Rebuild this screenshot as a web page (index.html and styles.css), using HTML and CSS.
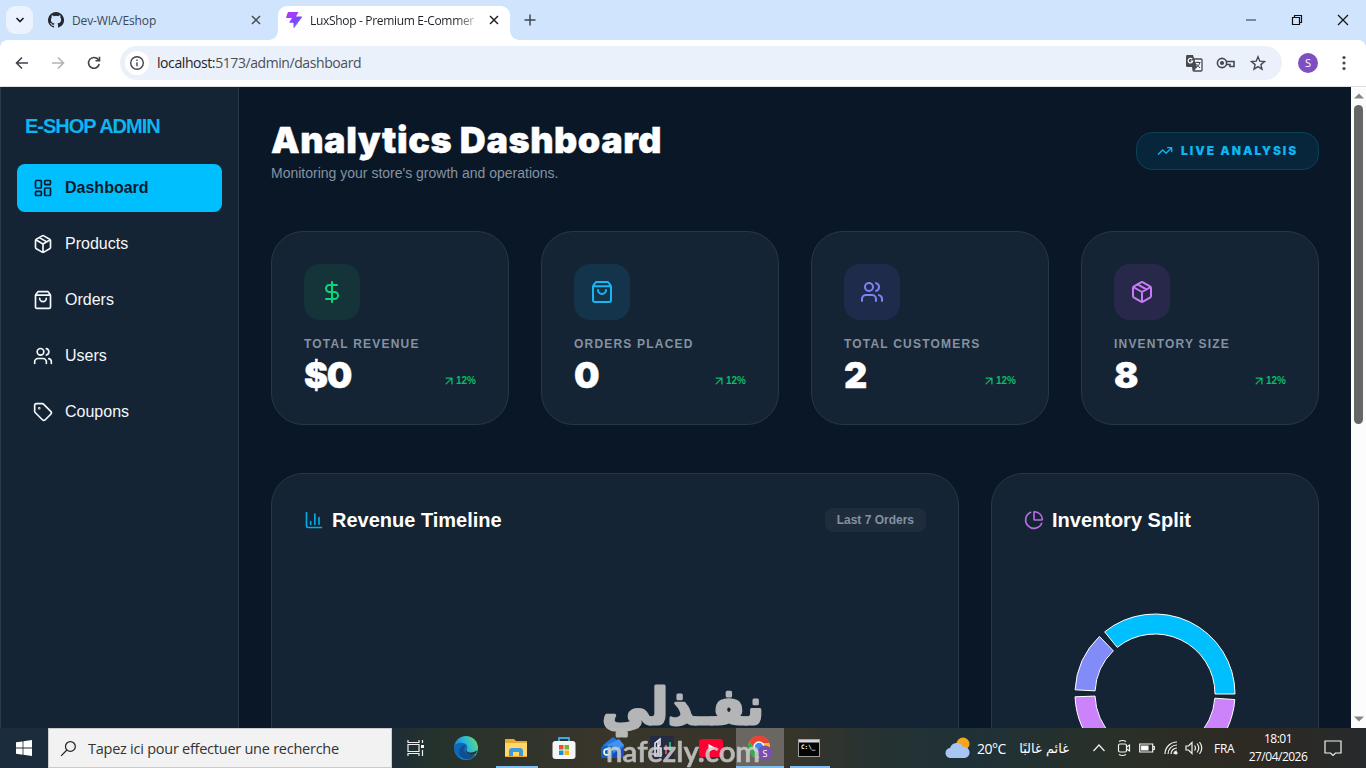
FILE: index.html
```html
<!DOCTYPE html>
<html lang="en">
<head>
<meta charset="utf-8">
<title>LuxShop - Premium E-Commerce</title>
<link rel="stylesheet" href="styles.css">
</head>
<body>
<svg class="sprite" aria-hidden="true">
  <symbol id="box" viewBox="0 0 24 24"><path d="M11 21.73a2 2 0 0 0 2 0l7-4A2 2 0 0 0 21 16V8a2 2 0 0 0-1-1.73l-7-4a2 2 0 0 0-2 0l-7 4A2 2 0 0 0 3 8v8a2 2 0 0 0 1 1.73zM12 22V12M3.29 7 12 12l8.71-5M7.5 4.27l9 5.15"/></symbol>
  <symbol id="bag" viewBox="0 0 24 24"><path d="M6 2 3.6 5.2A3 3 0 0 0 3 7v13a2 2 0 0 0 2 2h14a2 2 0 0 0 2-2V7a3 3 0 0 0-.6-1.8L18 2zM3.2 6.2h17.6M16 10a4 4 0 0 1-8 0"/></symbol>
  <symbol id="users" viewBox="0 0 24 24"><path d="M16 21v-2a4 4 0 0 0-4-4H6a4 4 0 0 0-4 4v2M16 3.13a4 4 0 0 1 0 7.75M22 21v-2a4 4 0 0 0-3-3.87"/><circle cx="9" cy="7" r="4"/></symbol>
  <symbol id="upright" viewBox="0 0 24 24"><path d="M7 7h10v10M7 17 17 7"/></symbol>
  <symbol id="close" viewBox="0 0 10 10"><path d="m1 1 8 8M9 1 1 9"/></symbol>
</svg>

<header class="tabstrip">
  <button class="tab-search"><svg class="ico" viewBox="0 0 10 10"><path d="m1.5 3 3.5 3.5L8.500 3"/></svg></button>
  <div class="tab">
    <svg class="fav" viewBox="0 0 16 16"><path fill="#24292f" d="M8 0a8 8 0 0 0-2.53 15.590c.4.070.55-.17.55-.38v-1.490c-2.010.37-2.530-.49-2.690-.94-.090-.23-.48-.94-.82-1.130-.28-.15-.68-.52-.010-.53.63-.010 1.080.58 1.230.82.72 1.210 1.870.87 2.330.66.070-.52.28-.87.510-1.070-1.780-.2-3.640-.89-3.640-3.950 0-.87.310-1.590.82-2.150-.080-.2-.36-1.020.080-2.120 0 0 .67-.21 2.200.82a7.400 7.400 0 0 1 4 0c1.530-1.040 2.200-.82 2.200-.82.44 1.100.16 1.920.080 2.120.51.56.82 1.270.82 2.150 0 3.070-1.870 3.750-3.650 3.950.29.25.54.73.54 1.480v2.200c0 .21.150.46.550.38A8 8 0 0 0 8 0"/></svg>
    <span class="tab-name">Dev-WIA/Eshop</span>
    <svg class="x"><use href="#close"/></svg>
  </div>
  <div class="tab active">
    <svg class="fav" viewBox="0 0 16 16"><defs><linearGradient id="bolt" x1="0" y1="0" x2="1" y2="1"><stop offset=".25" stop-color="#a63cfb"/><stop offset=".6" stop-color="#7d45fb"/><stop offset="1" stop-color="#38b8f5"/></linearGradient></defs><path fill="url(#bolt)" d="M2 0h10.500L10 4.500h5.600c.5 0 .5.500.2 1L8.300 15.700c-.3.400-.8.200-.8-.3v-4.700H3.800c-.6 0-.7-.4-.4-.8L6 6H.7c-.7 0-.8-.5-.5-1z"/></svg>
    <span class="tab-name">LuxShop - Premium E-Commer</span>
    <svg class="x"><use href="#close"/></svg>
  </div>
  <svg class="plus" viewBox="0 0 12 12"><path d="M6 .5v11M.5 6h11"/></svg>
  <div class="winbtns">
    <svg viewBox="0 0 12 12"><path d="M1 6h10"/></svg>
    <svg class="dark" viewBox="0 0 12 12"><path d="M1.500 3.500h7v7h-7zM3.500 3.500v-2h7v7h-2"/></svg>
    <svg class="dark" viewBox="0 0 12 12"><path d="m1 1 10 10M11 1 1 11"/></svg>
  </div>
</header>

<div class="toolbar">
  <svg class="nav-ico" viewBox="0 0 16 16"><path d="M14 8H2.500M8 2.500 2.500 8 8 13.500"/></svg>
  <svg class="nav-ico off" viewBox="0 0 16 16"><path d="M2 8h11.500M8 2.500 13.500 8 8 13.500"/></svg>
  <svg class="nav-ico" viewBox="0 0 16 16"><path d="M13.200 9A5.400 5.400 0 1 1 12 4.300M13.500 1.800v4h-4M13.200 5.500 10.800 3"/></svg>
  <div class="omnibox">
    <span class="info"><svg viewBox="0 0 16 16"><circle cx="8" cy="8" r="6.300"/><path d="M8 7.300v4M8 4.500v1.500"/></svg></span>
    <span class="url"><b>localhost:</b>5173/admin/dashboard</span>
    <svg class="translate" viewBox="0 0 18 18"><rect x="8" y="5" width="9" height="12" rx="1" fill="#f4f7fc" stroke="#454a50" stroke-width="1.300"/><path d="M1.500 1H8l4 12H2.500A1.500 1.500 0 0 1 1 11.500v-9z" fill="#454a50"/><path d="M7.300 5.200a2.300 2.300 0 1 0 .4 2H5.700" fill="none" stroke="#fff" stroke-width="1.200"/><path d="M10.500 8.500h5M13 7.500v1M14.800 8.700c-.5 2-1.500 3.500-3.500 4.800M11.500 10l3.500 4" fill="none" stroke="#454a50"/><path d="m12 13-3 4-2-4z" fill="#454a50"/></svg>
    <svg class="key" viewBox="0 0 20 12"><circle cx="6" cy="6" r="4.600"/><circle cx="6" cy="6" r="1.300" fill="#454a50"/><path d="M10 4.500h8v5h-4v-2h-4"/></svg>
    <svg class="star" viewBox="0 0 16 16"><path d="m8 1.800 1.800 4.400 4.700.4-3.600 3 1.100 4.600L8 11.700l-4 2.500 1.100-4.600-3.600-3 4.700-.4z"/></svg>
  </div>
  <span class="avatar">S</span>
  <svg class="kebab" viewBox="0 0 4 16"><circle cx="2" cy="2.500" r="1.600"/><circle cx="2" cy="8" r="1.600"/><circle cx="2" cy="13.500" r="1.600"/></svg>
</div>

<div class="page">
  <aside class="sidebar">
    <div class="brand">E-SHOP ADMIN</div>
    <nav class="menu">
      <a class="item current"><svg class="line" viewBox="0 0 24 24"><rect x="3" y="3" width="7" height="9" rx="1"/><rect x="14" y="3" width="7" height="5" rx="1"/><rect x="14" y="12" width="7" height="9" rx="1"/><rect x="3" y="16" width="7" height="5" rx="1"/></svg>Dashboard</a>
      <a class="item"><svg class="line"><use href="#box"/></svg>Products</a>
      <a class="item"><svg class="line"><use href="#bag"/></svg>Orders</a>
      <a class="item"><svg class="line"><use href="#users"/></svg>Users</a>
      <a class="item"><svg class="line" viewBox="0 0 24 24"><path d="M12.590 2.590A2 2 0 0 0 11.170 2H4a2 2 0 0 0-2 2v7.170a2 2 0 0 0 .59 1.420l8.700 8.700a2.430 2.430 0 0 0 3.420 0l6.580-6.580a2.430 2.430 0 0 0 0-3.420z"/><circle cx="7.500" cy="7.500" r=".5"/></svg>Coupons</a>
    </nav>
  </aside>

  <main class="main">
    <div class="head">
      <div>
        <h1>Analytics Dashboard</h1>
        <p class="sub">Monitoring your store's growth and operations.</p>
      </div>
      <div class="live"><svg class="line" viewBox="0 0 24 24"><path d="M16 7h6v6M22 7l-8.500 8.500-5-5L2 17"/></svg><span>LIVE ANALYSIS</span></div>
    </div>

    <section class="stats">
      <article class="card stat">
        <div class="badge green"><svg class="line" viewBox="0 0 24 24"><path d="M12 2v20M17 5H9.500a3.500 3.500 0 0 0 0 7h5a3.500 3.500 0 0 1 0 7H6"/></svg></div>
        <div class="label">TOTAL REVENUE</div>
        <div class="row"><span class="value">$0</span><span class="trend"><svg class="line"><use href="#upright"/></svg>12%</span></div>
      </article>
      <article class="card stat">
        <div class="badge blue"><svg class="line"><use href="#bag"/></svg></div>
        <div class="label">ORDERS PLACED</div>
        <div class="row"><span class="value">0</span><span class="trend"><svg class="line"><use href="#upright"/></svg>12%</span></div>
      </article>
      <article class="card stat">
        <div class="badge indigo"><svg class="line"><use href="#users"/></svg></div>
        <div class="label">TOTAL CUSTOMERS</div>
        <div class="row"><span class="value">2</span><span class="trend"><svg class="line"><use href="#upright"/></svg>12%</span></div>
      </article>
      <article class="card stat">
        <div class="badge purple"><svg class="line"><use href="#box"/></svg></div>
        <div class="label">INVENTORY SIZE</div>
        <div class="row"><span class="value">8</span><span class="trend"><svg class="line"><use href="#upright"/></svg>12%</span></div>
      </article>
    </section>

    <section class="charts">
      <article class="card chart wide">
        <div class="chart-head"><h2><svg class="line c-blue" viewBox="0 0 24 24"><path d="M3 3v16a2 2 0 0 0 2 2h16M18 17V9M13 17V5M8 17v-3"/></svg>Revenue Timeline</h2><span class="pill">Last 7 Orders</span></div>
      </article>
      <article class="card chart">
        <div class="chart-head"><h2><svg class="line c-purple" viewBox="0 0 24 24"><path d="M21 12c.55 0 1-.45.95-1A10 10 0 0 0 13 2.050c-.55-.050-1 .4-1 .95v8a1 1 0 0 0 1 1zM21.210 15.890A10 10 0 1 1 8 2.830"/></svg>Inventory Split</h2></div>
        <svg class="donut" viewBox="-82 -82 164 164">
          <path fill="#00bfff" d="M80 0A80 80 0 0 0-50.350-62.170L-37.760-46.630A60 60 0 0 1 60 0Z"/>
          <path fill="#818cf8" d="M-55.570-57.550A80 80 0 0 0-79.890-4.190L-59.920-3.140A60 60 0 0 1-41.680-43.160Z"/>
          <path fill="#cc82fb" d="M-79.950 2.790A80 80 0 0 0 79.800 5.580L59.850 4.190A60 60 0 0 1-59.960 2.090Z"/>
        </svg>
      </article>
    </section>
  </main>

  <div class="scroll">
    <svg viewBox="0 0 10 6"><path d="M0 5.500 5 .5l5 5z"/></svg>
    <div class="thumb"></div>
    <svg viewBox="0 0 10 6"><path d="M0 .5 5 5.500l5-5z"/></svg>
  </div>
</div>

<footer class="taskbar">
  <div class="start"><svg viewBox="0 0 16 16"><path fill="#fff" d="M0 2.300 6.600 1.400v6.200H0zM7.400 1.300 16 0v7.600H7.400zM0 8.400h6.600v6.300L0 13.800zM7.400 8.400H16V16l-8.600-1.200z"/></svg></div>
  <div class="search"><svg viewBox="0 0 18 18"><circle cx="11" cy="6.800" r="5.200"/><path d="M7.300 10.600 1.200 16.800"/></svg><span>Tapez ici pour effectuer une recherche</span></div>
  <div class="apps">
    <span class="app"><svg width="18" height="18" viewBox="0 0 18 18" fill="none" stroke="#eee" stroke-width="1.200"><path d="M1 1v2.500h11V1M1 17v-2.500h11V17M1 5.500h11v7H1zM15.500 1v3M15.500 11v6"/><path d="M14 6h3v3h-3z" fill="#fff" stroke="none"/></svg></span>
    <span class="app"><svg width="26" height="26" viewBox="0 0 26 26"><defs><linearGradient id="edge" x1="0" x2="1" y1=".7" y2=".2"><stop stop-color="#0b6fc4"/><stop offset=".5" stop-color="#21b2e5"/><stop offset="1" stop-color="#65dc70"/></linearGradient></defs><circle cx="13" cy="13" r="12" fill="url(#edge)"/><path d="M1 13c1-6 11-7 13-2 .8 2-1 3-1 4.500 0 3 5 4.500 10 2A12 12 0 0 1 1 13" fill="#1167b7"/><path d="M8 22c-4-5-1-12 5-12-5 5 0 12 9 10-3 5-10 6-14 2" fill="#0b4f94"/><path d="M14.500 12c-2 3-1 5.500 3 5.500 3 0 5-1 7-2.500l-1.500 3.500c-4 3-10 1-10-3 0-1.500 1-2 1.500-3.500" fill="#2b3637"/></svg></span>
    <span class="app open shift"><svg width="24" height="22" viewBox="0 0 24 22"><path d="M1 2h9l2 2h11v16H1z" fill="#e8a92d"/><path d="M1 6h22v13H1z" fill="#ffd76a"/><path d="M5 19v-5q0-3 3-3h8q3 0 3 3v5h-4v-4H9v4z" fill="#3b9bdc"/></svg></span>
    <span class="app"><svg width="24" height="24" viewBox="0 0 24 24"><path d="M7 6V2h10v4" fill="none" stroke="#35ade8" stroke-width="1.800"/><rect x=".5" y="5" width="23" height="18" rx="3" fill="#f5f5f5"/><path fill="#e8522a" d="M7 9h4.500v4.500H7z"/><path fill="#7ab529" d="M12.500 9H17v4.500h-4.500z"/><path fill="#1793dd" d="M7 14.500h4.500V19H7z"/><path fill="#f6b517" d="M12.500 14.500H17V19h-4.500z"/></svg></span>
    <span class="app"><svg width="24" height="24" viewBox="0 0 24 24"><path d="m2 9 10-8 11 8v10q0 3-3 3H8z" fill="#2475df"/><path d="m6 9 12-6 5 6-11 8z" fill="#3f93ee"/><path d="m5 22 18-11v9q0 2-3 2z" fill="#174ebc"/><rect y="10" width="12" height="12" rx="2" fill="#1264be"/><circle cx="6" cy="16" r="3" fill="none" stroke="#fff" stroke-width="1.600"/></svg></span>
    <span class="app"><svg width="24" height="24" viewBox="0 0 24 24"><path fill="#252b43" d="M0 0h24v24H0z"/><path d="M5 20V7l5-4v6l-3 3h4v8zM8 5v14" fill="none" stroke="#f0f0f0" stroke-width="1.500"/><path d="M16 9v9" stroke="#e44b56" stroke-width="2"/><path d="M20 6v9" stroke="#28ad72" stroke-width="2"/></svg></span>
    <span class="app"><svg width="24" height="18" viewBox="0 0 24 18"><rect width="24" height="18" rx="3" fill="#ff0033"/><path fill="#fff" d="m9.500 5 7 4-7 4z"/></svg></span>
    <span class="app hot open"><svg width="26" height="26" viewBox="0 0 26 26"><circle cx="12" cy="12" r="11" fill="#fbc116"/><path d="M2.500 6.500A11 11 0 0 1 22.500 8H12a5 5 0 0 0-4.500 6z" fill="#ea4335"/><path d="M2.500 6.500 8 15l5 2-3 6A11 11 0 0 1 2.500 6.500" fill="#34a853"/><circle cx="12" cy="12" r="5" fill="#4285f4" stroke="#fff" stroke-width="1.500"/><circle cx="18" cy="18" r="7.500" fill="#7950ad"/><text x="18" y="21.500" class="mini">S</text></svg></span>
    <span class="app open cmd"><svg width="22" height="18" viewBox="0 0 22 18"><rect x=".5" y=".5" width="21" height="17" fill="#050505" stroke="#a0a0a0"/><path fill="#d8d8d8" d="M1 1h20v2.500H1z"/><text x="3" y="9.500" class="prompt">C:\_</text></svg></span>
  </div>
  <div class="tray">
    <svg class="weather" width="26" height="22" viewBox="0 0 26 22"><circle cx="18" cy="7" r="6.500" fill="#f7a51c"/><path d="M6 21a5 5 0 0 1-1-10A7 7 0 0 1 18 10a5.500 5.500 0 0 1 2 11z" fill="#a9c5f4"/></svg>
    <span class="temp">20°C</span>
    <span class="cond" dir="rtl" lang="ar">غائم غالبًا</span>
    <svg class="t1" width="14" height="10" viewBox="0 0 14 10"><path d="m1.500 8 5.500-6 5.500 6"/></svg>
    <svg class="t2" width="14" height="18" viewBox="0 0 14 18"><rect x="1.500" y="5" width="8" height="8" rx="1.500"/><path d="m9.500 8 3-2v6l-3-2M2 2.500Q5.500.5 9 2.500M2 15.500q3.500 2 7 0"/></svg>
    <svg class="t3" width="16" height="10" viewBox="0 0 16 10"><path d="M.7 1h13v8H.7zM14 3.500h1.300v3H14"/><path d="M2.500 3H9v4H2.500z" fill="#fff"/></svg>
    <svg class="t4" width="14" height="14" viewBox="0 0 14 14"><path d="M1 13A12 12 0 0 1 13 1M4 13a9 9 0 0 1 9-9M7 13a6 6 0 0 1 6-6M10 13a3 3 0 0 1 3-3"/><circle cx="12" cy="12" r="1" fill="#fff"/></svg>
    <svg class="t5" width="18" height="14" viewBox="0 0 18 14"><path d="M1 5h2.500L7 1.500v11L3.500 9H1zM9.500 4.500q2 2.500 0 5M12 2.500q3.500 4.500 0 9M14.500 1q4.500 6 0 12"/></svg>
    <span class="lang">FRA</span>
    <span class="clock"><span>18:01</span><span>27/04/2026</span></span>
    <svg class="t6" width="18" height="17" viewBox="0 0 18 17"><path d="M1 1h16v12h-5.500L9 15.500 6.500 13H1z"/></svg>
  </div>
</footer>

<svg class="watermark" viewBox="0 0 180 92">
  <text x="168" y="47.500" class="wm-ar" direction="rtl" textLength="162" lengthAdjust="spacingAndGlyphs">نفـذلي</text>
  <text x="10" y="85.500" class="wm-en" textLength="154" lengthAdjust="spacingAndGlyphs">nafezly.com</text>
</svg>
</body>
</html>
```
FILE: styles.css
```css
* { box-sizing: border-box; }
body {
  margin: 0;
  width: 1366px;
  height: 768px;
  overflow: hidden;
  display: flex;
  flex-direction: column;
  position: relative;
  background: #d0e4fd;
  font-family: "Liberation Sans", Arial, sans-serif;
}
svg { display: block; flex: none; }
.sprite { display: none; }
.line { fill: none; stroke: currentColor; stroke-width: 2; stroke-linecap: round; stroke-linejoin: round; width: 20px; height: 20px; }

/* Browser tabs */
.tabstrip { height: 40px; flex: none; display: flex; align-items: center; padding-left: 6px; font: 12px "Open Sans", sans-serif; color: #3c4752; }
.tab-search { width: 27px; height: 28px; border: 0; border-radius: 9px; background: #eaf3fe; padding: 0; display: grid; place-items: center; }
.ico { width: 10px; height: 10px; fill: none; stroke: #1f2328; stroke-width: 1.7; }
.tab { width: 245px; height: 34px; display: flex; align-items: center; padding: 0 17px 0 15px; }
.fav { width: 16px; height: 16px; margin-right: 8px; }
.tab-name { flex: 1; white-space: nowrap; overflow: hidden; letter-spacing: -0.150px; }
.x { width: 10px; height: 10px; fill: none; stroke: #454b52; stroke-width: 1.5; margin-left: 12px; }
.tab.active { width: 232px; margin-top: 6px; padding: 0 11px 6px 8px; background: #fff; color: #1f2328; border-radius: 9px 9px 0 0; position: relative; }
.tab.active::before, .tab.active::after { content: ""; position: absolute; bottom: 0; width: 9px; height: 9px; }
.tab.active::before { left: -9px; background: radial-gradient(circle at 0 0, transparent 8.5px, #fff 9px); }
.tab.active::after { right: -9px; background: radial-gradient(circle at 100% 0, transparent 8.500px, #fff 9px); }
.active .tab-name { letter-spacing: -0.32px; -webkit-mask-image: linear-gradient(90deg, #000 146px, transparent 172px); mask-image: linear-gradient(90deg, #000 146px, transparent 172px); }
.active .x { stroke: #1f2328; }
.plus { width: 12px; height: 12px; margin-left: 14px; fill: none; stroke: #3c4752; stroke-width: 1.5; }
.winbtns { margin-left: auto; display: flex; gap: 34px; padding-right: 17px; }
.winbtns svg { width: 12px; height: 12px; fill: none; stroke: #5d6b80; stroke-width: 1.500; }
.winbtns .dark { stroke: #111; stroke-width: 1.200; }

/* Address bar */
.toolbar { height: 47px; flex: none; background: #fff; border-bottom: 1px solid #dcdfe3; border-radius: 8px 8px 0 0; display: flex; align-items: center; padding-left: 14px; }
.nav-ico { width: 16px; height: 16px; margin-right: 20px; fill: none; stroke: #3f454b; stroke-width: 1.600; }
.nav-ico.off { stroke: #b0b3b7; }
.nav-ico:nth-child(3) { margin-right: 18px; }
.omnibox { width: 1162px; height: 34px; border-radius: 17px; background: #ebf1fa; display: flex; align-items: center; padding: 0 16px 0 5px; }
.info { width: 24px; height: 24px; border-radius: 50%; background: #fff; display: grid; place-items: center; margin-right: 8px; }
.info svg { width: 16px; height: 16px; fill: none; stroke: #3f454b; stroke-width: 1.400; }
.url { flex: 1; font: 14px "Open Sans", sans-serif; color: #4a5058; letter-spacing: -0.42px; padding-bottom: 1px; }
.url b { font-weight: 400; color: #1f2328; }
.translate { width: 18px; height: 18px; margin-right: 13px; }
.key { width: 20px; height: 12px; margin-right: 14px; fill: none; stroke: #454a50; stroke-width: 1.600; }
.star { width: 16px; height: 16px; fill: none; stroke: #454a50; stroke-width: 1.400; }
.avatar { width: 20px; height: 20px; border-radius: 50%; margin-left: 16px; background: #7e4fc0; color: #fff; font: 11px/20px "Open Sans", sans-serif; text-align: center; }
.kebab { width: 4px; height: 16px; margin-left: 24px; fill: #454a50; }

/* Page */
.page { height: 641px; flex: none; display: flex; overflow: hidden; background: #091727; }
.sidebar { width: 239px; flex: none; background: #152434; border: 1px solid #2a3947; border-width: 0 1px; padding: 24px 16px; }
.brand { padding-left: 8px; font-size: 20px; line-height: 30px; font-weight: 700; letter-spacing: -1px; color: #0cb6f2; }
.menu { display: flex; flex-direction: column; gap: 8px; margin-top: 23px; }
.item { height: 48px; display: flex; align-items: center; gap: 12px; padding: 0 16px 1px; border-radius: 8px; color: #f5f8fb; font-size: 16px; line-height: 24px; }
.item.current { background: #00bfff; color: #0b1a2b; font-weight: 700; letter-spacing: 0; }
.main { width: 1112px; flex: none; padding: 32px; }
.head { height: 64px; display: flex; align-items: center; justify-content: space-between; }
h1 { margin: 0; height: 44px; line-height: 42px; font-family: Inter, sans-serif; font-size: 36px; font-weight: 900; letter-spacing: 0.550px; -webkit-text-stroke: 0.4px #fff; color: #fff; white-space: nowrap; }
.sub { margin: 0; font-size: 14px; line-height: 20px; color: #8593a3; }
.live { width: 183px; height: 38px; border: 1px solid #0b4053; border-radius: 16px; background: #08263b; display: flex; align-items: center; gap: 8px; padding-left: 20px; color: #0fb5f0; font: 900 12px/16px Inter, sans-serif; letter-spacing: 1.950px; white-space: nowrap; }
.live svg { width: 16px; height: 16px; }
.card { background: #152434; border: 1px solid #293745; border-radius: 32px; padding: 32px; }
.stats { display: grid; grid-template-columns: repeat(4, 1fr); gap: 32px; margin-top: 48px; }
.stat { height: 194px; }
.badge { width: 56px; height: 56px; border-radius: 16px; display: grid; place-items: center; }
.badge svg { width: 24px; height: 24px; }
.green { background: #14343a; color: #08d879; }
.blue { background: #13344a; color: #16b7f3; }
.indigo { background: #1e2b4a; color: #7d83f5; }
.purple { background: #28284b; color: #c77bf8; }
.label { margin-top: 16px; font-size: 12px; line-height: 16px; font-weight: 700; letter-spacing: 1.2px; color: #8492a1; white-space: nowrap; }
.row { height: 40px; display: flex; justify-content: space-between; align-items: flex-end; }
.value { font: 900 36px/34px Inter, sans-serif; color: #fff; letter-spacing: -1.200px; -webkit-text-stroke: 0.4px #fff; }
.trend { display: flex; align-items: center; margin-bottom: 4px; font-size: 10px; line-height: 15px; font-weight: 700; color: #05bf63; }
.trend svg { width: 14px; height: 14px; stroke-width: 2.200; }
.charts { display: grid; grid-template-columns: repeat(3, 1fr); gap: 32px; margin-top: 48px; }
.wide { grid-column: span 2; }
.chart { height: 440px; }
.chart-head { height: 28px; display: flex; align-items: center; justify-content: space-between; }
h2 { margin: 0; display: flex; align-items: center; gap: 8px; font-size: 20px; line-height: 28px; color: #fff; white-space: nowrap; }
.c-blue { color: #05a9e5; }
.c-purple { color: #b66ee3; }
.pill { height: 24px; padding: 0 12px; border-radius: 8px; background: #1e2c3b; color: #8391a0; font-size: 12px; line-height: 24px; font-weight: 700; white-space: nowrap; }
.donut { width: 164px; height: 164px; margin: 77.5px auto 0; stroke: #fff; stroke-width: 1; }
.scroll { width: 15px; flex: none; background: #fcfcfc; display: flex; flex-direction: column; align-items: center; padding: 6px 0; }
.scroll svg { width: 10px; height: 6px; fill: #858585; }
.thumb { width: 9px; height: 319px; margin: 6px 0 auto; border-radius: 5px; background: #666; }

/* Taskbar */
.taskbar { height: 40px; flex: none; display: flex; background: linear-gradient(90deg, #1b2d3d 0, #1c2c39 28%, #25322c 32%, #38352b 43%, #37352a 58%, #243233 65%, #1f3138 71%, #293027 82%, #2e2923 92%, #262a2c); font-family: "Open Sans", sans-serif; color: #fff; }
.start { width: 48px; display: grid; place-items: center; }
.start svg { width: 16px; height: 16px; }
.search { width: 344px; flex: none; background: #f2f2f2; border: 1px solid #c8cbce; display: flex; align-items: center; gap: 11px; padding-left: 11px; color: #333; font-size: 14.5px; letter-spacing: -0.25px; white-space: nowrap; }
.search svg { width: 17px; height: 17px; fill: none; stroke: #222; stroke-width: 1.300; }
.apps { display: flex; flex: none; width: 440px; gap: 1.200px; }
.app { width: 48px; flex: none; height: 40px; display: grid; place-items: center; }
.app:nth-child(2) { padding-left: 2px; }
.open { background: linear-gradient(#80bdf0, #80bdf0) 50% 100% / 40px 2px no-repeat; }
.shift { padding-left: 3px; background-position: 100% 100%; background-size: 42px 2px; }
.hot { background: linear-gradient(#80bdf0, #80bdf0) 50% 100% / 48px 2px no-repeat #6a6762; }
.cmd svg { margin-right: 2px; }
.mini { font: 9px "Open Sans", sans-serif; fill: #fff; text-anchor: middle; }
.prompt { font: bold 6px "DejaVu Sans Mono", monospace; fill: #fff; }
.tray { flex: 1; display: flex; align-items: center; padding-left: 113px; font-size: 14px; white-space: nowrap; }
.tray svg { fill: none; stroke: #f2f2f2; stroke-width: 1.200; }
.tray .weather { stroke: none; }
.temp { width: 38px; margin-left: 6px; letter-spacing: -0.5px; }
.cond { width: 54px; font-family: "DejaVu Sans", sans-serif; font-size: 13px; }
.t1 { margin-left: 23px; }
.t2 { margin-left: 11px; }
.t3 { margin-left: 8px; }
.t4 { margin-left: 9px; }
.t5 { margin-left: 7px; }
.lang { width: 24px; margin-left: 11px; font-size: 12px; letter-spacing: -0.3px; }
.clock { width: 60px; margin-left: 10px; display: flex; flex-direction: column; align-items: center; font-size: 12px; line-height: 18px; letter-spacing: -0.5px; }
.t6 { margin-left: 16px; }

/* Site stamp over the page and the taskbar */
.watermark { position: absolute; left: 596px; top: 676px; width: 180px; height: 92px; fill: #cfcfcf; stroke: #cfcfcf; stroke-linejoin: round; opacity: .85; }
.wm-ar { font: bold 50px "DejaVu Sans", sans-serif; stroke-width: 3; }
.wm-en { font: 600 29px Lato, sans-serif; stroke-width: .6; }
```
